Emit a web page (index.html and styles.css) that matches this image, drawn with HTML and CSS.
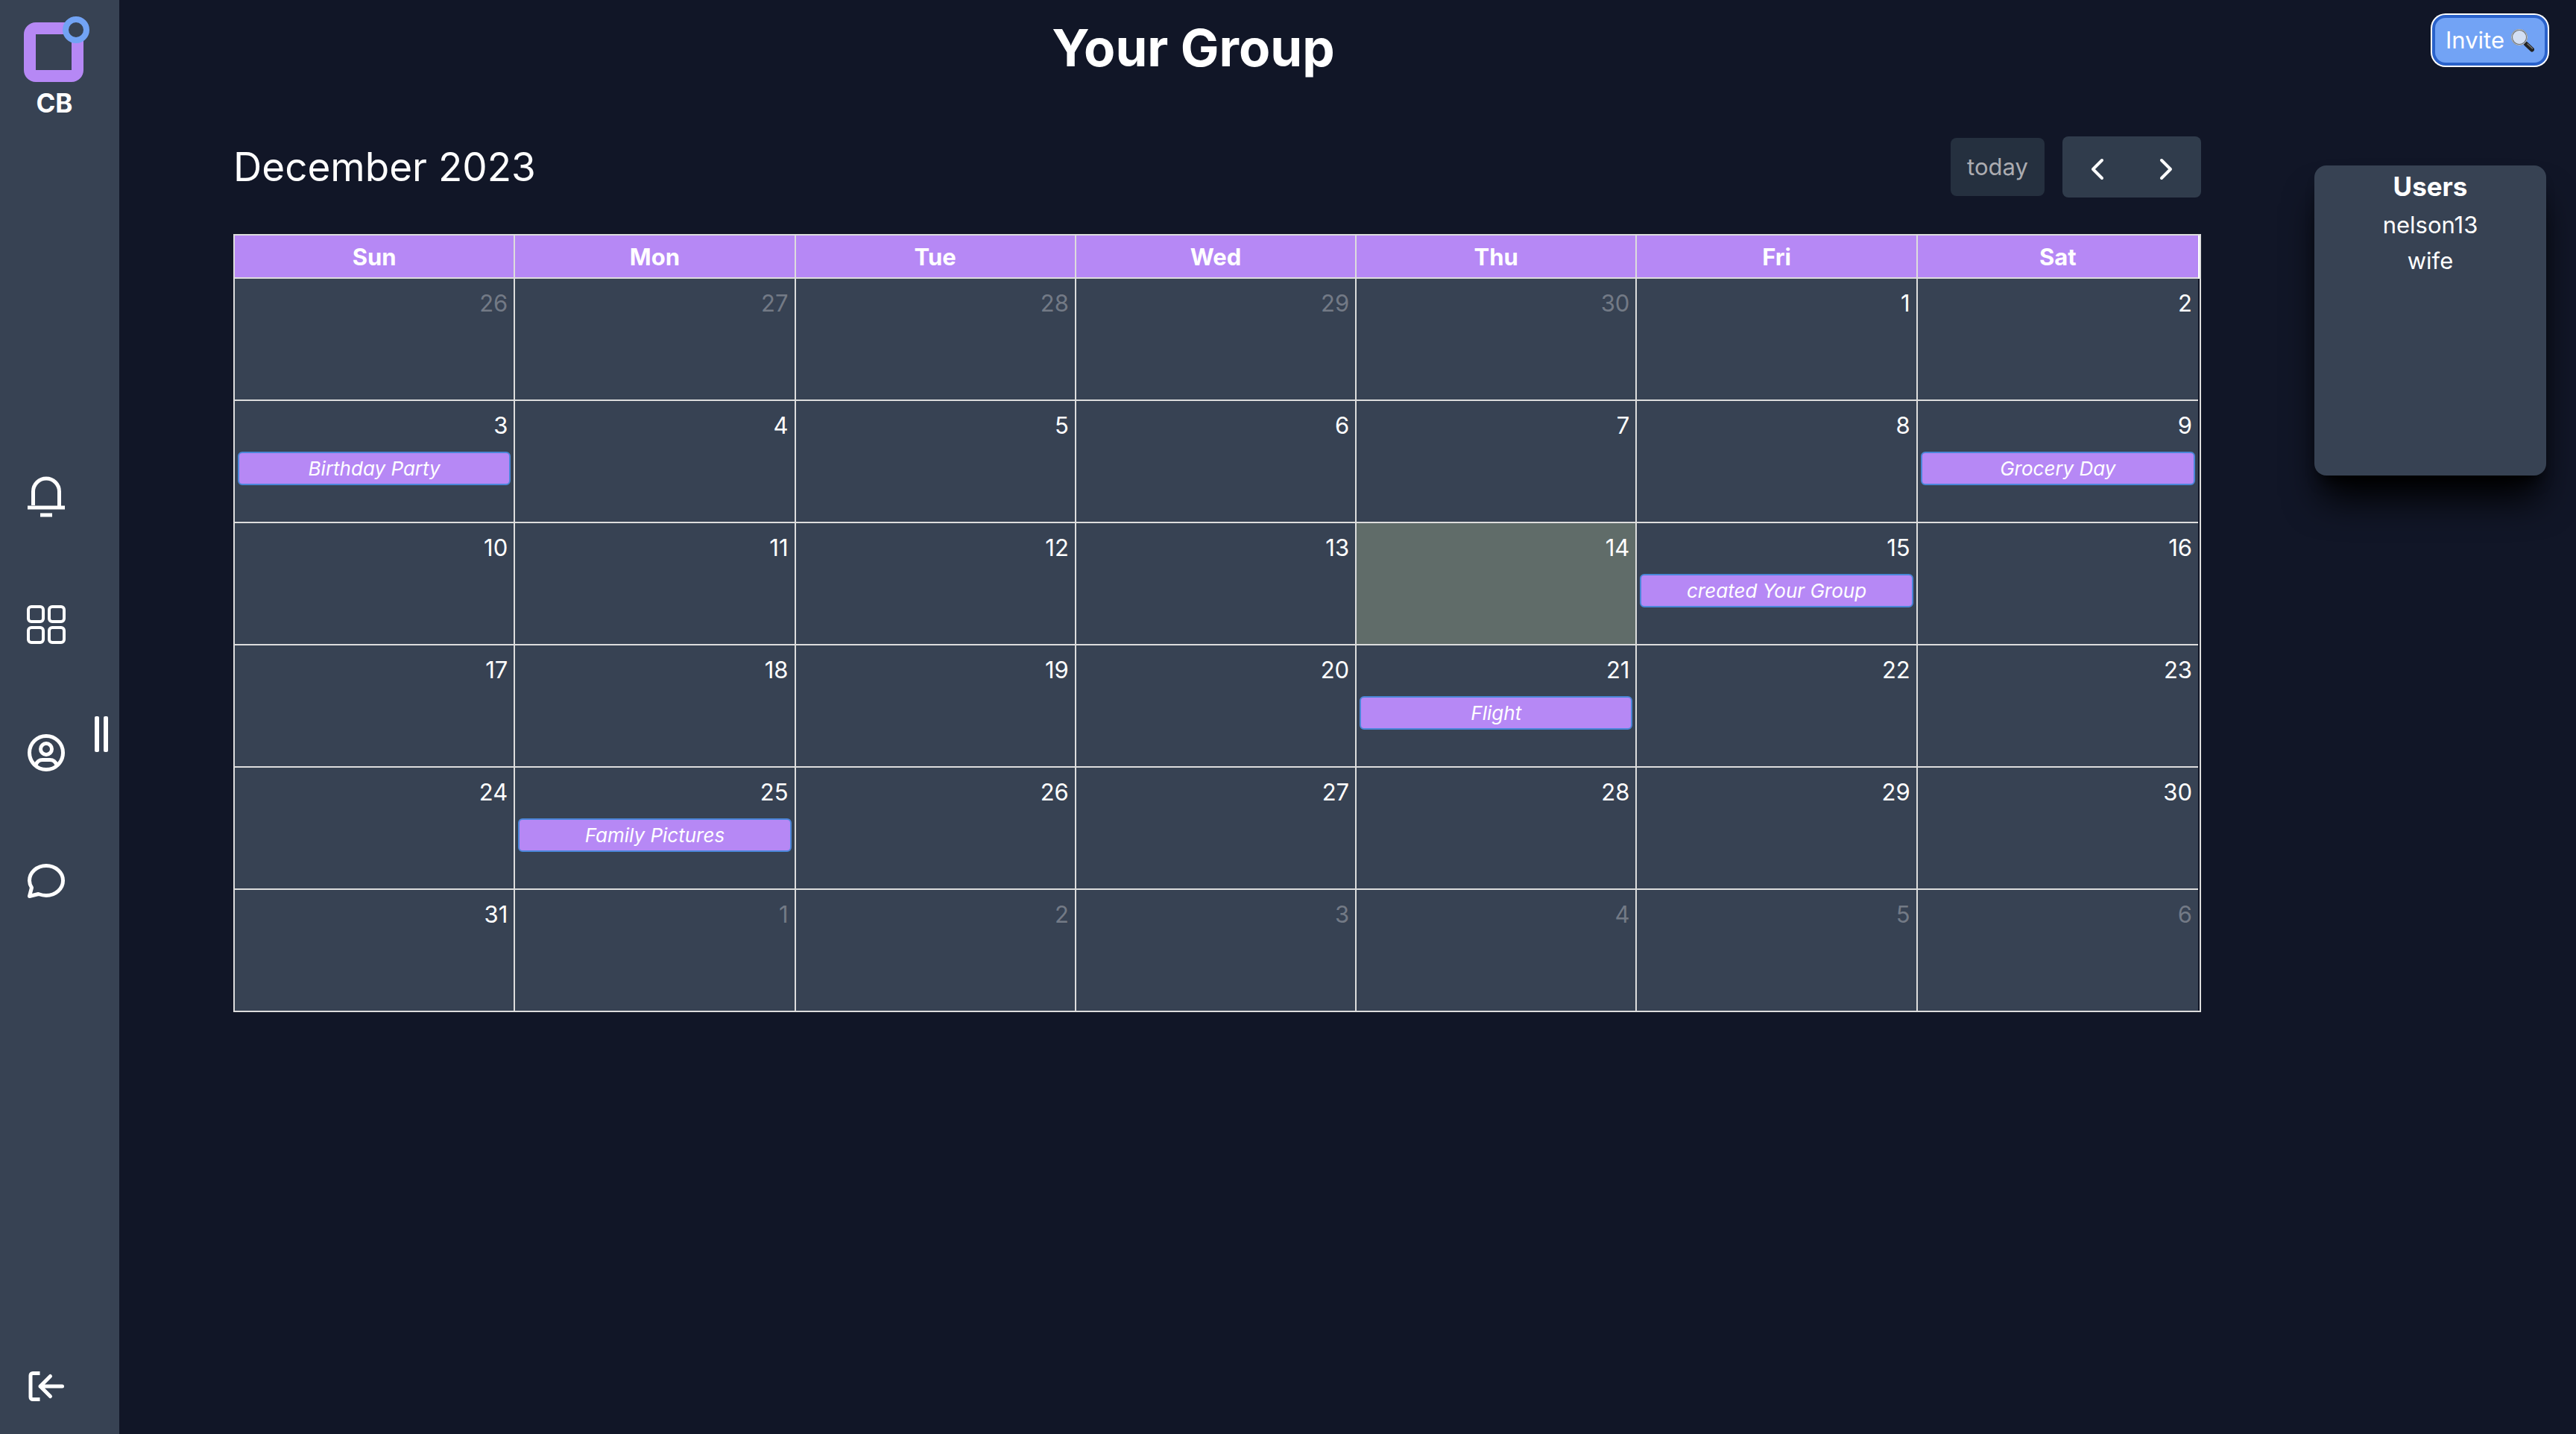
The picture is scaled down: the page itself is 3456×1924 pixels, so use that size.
FILE: index.html
```html
<!DOCTYPE html>
<html lang="en">
<head>
<meta charset="utf-8">
<meta name="viewport" content="width=device-width, initial-scale=1">
<title>Your Group</title>
<link rel="stylesheet" href="styles.css">
</head>
<body>
<div class="app">
  <aside class="sidebar">
    <div class="sidebar-content">
      <a class="logo" href="#" aria-label="CB home">
        <svg class="logo-mark" viewBox="0 0 88 88" aria-hidden="true">
          <path class="logo-square" fill-rule="evenodd" d="M16 8H64A16 16 0 0 1 80 24V72A16 16 0 0 1 64 88H16A16 16 0 0 1 0 72V24A16 16 0 0 1 16 8ZM16 24V72H64V24Z"/>
          <circle class="logo-dot" cx="70" cy="18" r="14"/>
        </svg>
        <span>CB</span>
      </a>
      <nav class="nav" aria-label="Main">
        <a class="icon-link" href="#" aria-label="Notifications">
          <svg class="icon" viewBox="0 0 56 56"><path d="M10.500 40V21.500a17.500 17.500 0 0 1 35 0V42M3 43h50M20 53h16"/></svg>
        </a>
        <a class="icon-link" href="#" aria-label="Groups">
          <svg class="icon icon-thin" viewBox="0 0 56 56"><rect x="4" y="4" width="20" height="20" rx="4"/><rect x="32" y="4" width="20" height="20" rx="4"/><rect x="4" y="32" width="20" height="20" rx="4"/><rect x="32" y="32" width="20" height="20" rx="4"/></svg>
        </a>
        <a class="icon-link" href="#" aria-label="Profile">
          <svg class="icon" viewBox="0 0 56 56"><circle cx="28" cy="28" r="22.500"/><circle cx="28" cy="23" r="7.500"/><path d="M14 44.500C15.500 40 18.500 37.500 23 37.500H33C37.500 37.500 40.500 40 42 44.500"/></svg>
        </a>
        <a class="icon-link" href="#" aria-label="Messages">
          <svg class="icon" viewBox="0 0 56 56"><path stroke-linejoin="round" d="M5.500 48.500L8.500 37C6.500 34 5.500 30.500 5.500 27.500C5.500 16.500 15.500 7.500 28 7.500S50.500 16.500 50.500 27.500S40.500 47.500 28 47.500C23.500 47.500 20.500 46.500 17.500 45.500Z"/></svg>
        </a>
      </nav>
      <a class="icon-link logout" href="#" aria-label="Log out">
        <svg class="icon" viewBox="0 0 56 56"><path d="M19.500 10.500H10A3 3 0 0 0 7 13.500V42.500A3 3 0 0 0 10 45.500H19.500"/><path stroke-linecap="round" stroke-linejoin="round" d="M33.500 14.500L20 28L33.500 41.500M20 28H49.500"/></svg>
      </a>
    </div>
    <button class="handle" type="button" aria-label="Resize sidebar"><span></span><span></span></button>
  </aside>

  <main class="main">
    <header class="header">
      <h1>Your Group</h1>
      <div class="header-actions">
        <button class="invite" type="button">Invite
          <svg class="magnifier" viewBox="0 0 32 32" aria-hidden="true">
            <path d="M21 21L29 28.500" stroke="#222" stroke-width="6" stroke-linecap="round"/>
            <path d="M23 21L29.500 27" stroke="#777" stroke-width="1.500" stroke-linecap="round"/>
            <circle cx="12" cy="12" r="10" fill="#d3dff3" stroke="#6b7178" stroke-width="2"/>
            <circle cx="12" cy="12" r="10.500" fill="none" stroke="#c4c7cb" stroke-width="1"/>
          </svg>
        </button>
      </div>
    </header>

    <div class="content">
      <section class="calendar">
        <div class="toolbar">
          <h2>December 2023</h2>
          <div class="toolbar-actions">
            <button class="today" type="button" disabled>today</button>
            <div class="button-group">
              <button type="button" aria-label="Previous month"><svg viewBox="0 0 32 32"><path d="M22 4L10 16L22 28"/></svg></button>
              <button type="button" aria-label="Next month"><svg viewBox="0 0 32 32"><path d="M9 4L21 16L9 28"/></svg></button>
            </div>
          </div>
        </div>
        <table class="month">
          <thead>
            <tr><th scope="col">Sun</th><th scope="col">Mon</th><th scope="col">Tue</th><th scope="col">Wed</th><th scope="col">Thu</th><th scope="col">Fri</th><th scope="col">Sat</th></tr>
          </thead>
          <tbody>
            <tr>
              <td class="other"><div class="day"><span>26</span></div></td>
              <td class="other"><div class="day"><span>27</span></div></td>
              <td class="other"><div class="day"><span>28</span></div></td>
              <td class="other"><div class="day"><span>29</span></div></td>
              <td class="other"><div class="day"><span>30</span></div></td>
              <td><div class="day"><span>1</span></div></td>
              <td><div class="day"><span>2</span></div></td>
            </tr>
            <tr>
              <td><div class="day"><span>3</span><a class="event" href="#">Birthday Party</a></div></td>
              <td><div class="day"><span>4</span></div></td>
              <td><div class="day"><span>5</span></div></td>
              <td><div class="day"><span>6</span></div></td>
              <td><div class="day"><span>7</span></div></td>
              <td><div class="day"><span>8</span></div></td>
              <td><div class="day"><span>9</span><a class="event" href="#">Grocery Day</a></div></td>
            </tr>
            <tr>
              <td><div class="day"><span>10</span></div></td>
              <td><div class="day"><span>11</span></div></td>
              <td><div class="day"><span>12</span></div></td>
              <td><div class="day"><span>13</span></div></td>
              <td class="current"><div class="day"><span>14</span></div></td>
              <td><div class="day"><span>15</span><a class="event" href="#">created Your Group</a></div></td>
              <td><div class="day"><span>16</span></div></td>
            </tr>
            <tr>
              <td><div class="day"><span>17</span></div></td>
              <td><div class="day"><span>18</span></div></td>
              <td><div class="day"><span>19</span></div></td>
              <td><div class="day"><span>20</span></div></td>
              <td><div class="day"><span>21</span><a class="event" href="#">Flight</a></div></td>
              <td><div class="day"><span>22</span></div></td>
              <td><div class="day"><span>23</span></div></td>
            </tr>
            <tr>
              <td><div class="day"><span>24</span></div></td>
              <td><div class="day"><span>25</span><a class="event" href="#">Family Pictures</a></div></td>
              <td><div class="day"><span>26</span></div></td>
              <td><div class="day"><span>27</span></div></td>
              <td><div class="day"><span>28</span></div></td>
              <td><div class="day"><span>29</span></div></td>
              <td><div class="day"><span>30</span></div></td>
            </tr>
            <tr>
              <td><div class="day"><span>31</span></div></td>
              <td class="other"><div class="day"><span>1</span></div></td>
              <td class="other"><div class="day"><span>2</span></div></td>
              <td class="other"><div class="day"><span>3</span></div></td>
              <td class="other"><div class="day"><span>4</span></div></td>
              <td class="other"><div class="day"><span>5</span></div></td>
              <td class="other"><div class="day"><span>6</span></div></td>
            </tr>
          </tbody>
        </table>
      </section>

      <section class="users">
        <h3>Users</h3>
        <ul>
          <li>nelson13</li>
          <li>wife</li>
        </ul>
      </section>
    </div>
  </main>
</div>
</body>
</html>
```
FILE: styles.css
```css
:root {
  --bg: #111627;
  --panel: #374253;
  --purple: #b688f5;
  --blue: #72a3f5;
  --line: #dddddd;
}

* {
  box-sizing: border-box;
}

body {
  margin: 0;
  background: var(--bg);
  color: #fff;
  font-family: Inter, "Liberation Sans", sans-serif;
  font-size: 31px;
  line-height: 48px;
}

h1, h2, h3, ul {
  margin: 0;
  padding: 0;
}

button {
  border: 0;
  padding: 0;
  color: inherit;
  font: inherit;
}

a {
  color: inherit;
  text-decoration: none;
}

.app {
  display: flex;
  min-height: 100vh;
}

/* Sidebar */
.sidebar {
  display: flex;
  flex: none;
  width: 160px;
  background: var(--panel);
}

.sidebar-content {
  display: flex;
  flex-direction: column;
  width: 127px;
  padding: 22px 0 36px;
}

.logo {
  display: flex;
  flex-direction: column;
  width: 82px;
  margin-left: 32px;
  align-items: center;
  font-size: 35px;
  font-weight: 700;
  line-height: 56px;
}

.logo-mark {
  width: 88px;
  height: 88px;
  align-self: flex-start;
  flex: none;
}

.logo-square {
  fill: var(--purple);
}

.logo-dot {
  fill: var(--panel);
  stroke: var(--blue);
  stroke-width: 8;
}

.nav {
  display: flex;
  flex-direction: column;
  gap: 116px;
  margin: 472px 0 48px 34px;
}

.icon-link {
  display: block;
  width: 56px;
  height: 56px;
}

.icon {
  display: block;
  width: 56px;
  height: 56px;
  fill: none;
  stroke: #fff;
  stroke-width: 5;
}

.icon-thin {
  stroke-width: 4;
}

.logout {
  margin-top: auto;
  margin-left: 34px;
}

.handle {
  display: flex;
  gap: 6px;
  align-self: center;
  margin-top: 46px;
  background: none;
}

.handle span {
  width: 6px;
  height: 48px;
  border-radius: 2px;
  background: #fff;
}

/* Page */
.main {
  flex: 1;
  min-width: 0;
}

.header {
  display: flex;
  align-items: flex-start;
  height: 183px;
  padding-top: 24px;
}

.header h1 {
  flex: 1;
  font-size: 69px;
  font-weight: 700;
  line-height: 80px;
  text-align: center;
}

.header-actions {
  display: flex;
  justify-content: flex-end;
  width: 414px;
  padding-right: 42px;
}

.invite {
  display: flex;
  align-items: center;
  gap: 8px;
  height: 60px;
  padding: 0 14px;
  border-radius: 14px;
  background: var(--blue);
  box-shadow: 0 0 0 4px #2a62cb, 0 0 0 6px #fff;
}

.magnifier {
  width: 32px;
  height: 32px;
  fill: none;
}

.content {
  display: flex;
  align-items: flex-start;
  gap: 152px;
  padding: 0 40px 48px 153px;
}

/* Calendar */
.calendar {
  flex: 1;
  min-width: 0;
}

.toolbar {
  display: flex;
  align-items: center;
  justify-content: space-between;
  margin-bottom: 49px;
}

.toolbar h2 {
  font-size: 53px;
  font-weight: 400;
  line-height: 82px;
}

.toolbar-actions {
  display: flex;
  align-items: center;
  gap: 24px;
}

.today {
  width: 126px;
  height: 78px;
  border-radius: 8px;
  background: #25303f;
  color: #acacb1;
}

.button-group {
  display: flex;
  width: 186px;
  height: 82px;
  border-radius: 8px;
  background: #303c4c;
}

.button-group button {
  display: flex;
  flex: 1;
  align-items: center;
  justify-content: center;
  padding-top: 6px;
  background: none;
}

.button-group svg {
  width: 32px;
  height: 32px;
  fill: none;
  stroke: #fff;
  stroke-width: 4;
  stroke-linecap: round;
  stroke-linejoin: round;
}

.month {
  width: 100%;
  padding: 0 2px 0 0;
  border: 2px solid var(--line);
  border-spacing: 0;
  table-layout: fixed;
}

.month th {
  height: 58px;
  padding: 2px 0 0;
  border-right: 2px solid var(--line);
  border-bottom: 2px solid var(--line);
  background: var(--purple);
  font-weight: 700;
}

.month td {
  padding: 0;
  border-right: 2px solid var(--line);
  border-bottom: 2px solid var(--line);
  background: var(--panel);
  vertical-align: top;
}

.month th:last-child,
.month td:last-child {
  border-right: 0;
}

.month th:last-child {
  box-shadow: 2px 0 0 #fff;
}

.month tbody tr:last-child td {
  border-bottom: 0;
}

.month .current {
  background: #606c69;
}

.day {
  display: flex;
  flex-direction: column;
  gap: 11px;
  height: 162px;
  padding: 9px 4px 8px;
}

.day span {
  padding-right: 4px;
  text-align: right;
}

.other span {
  color: #737a86;
}

.event {
  height: 45px;
  border: 2px solid #4a86d8;
  border-radius: 6px;
  background: var(--purple);
  font-size: 26px;
  font-style: italic;
  line-height: 41px;
  text-align: center;
}

/* Users */
.users {
  width: 311px;
  height: 416px;
  margin-top: 39px;
  border-radius: 16px;
  background: var(--panel);
  box-shadow: 0 40px 50px -10px #000, 0 16px 20px -12px #000;
  text-align: center;
}

.users h3 {
  font-size: 35px;
  font-weight: 700;
  line-height: 56px;
}

.users ul {
  list-style: none;
}
```
